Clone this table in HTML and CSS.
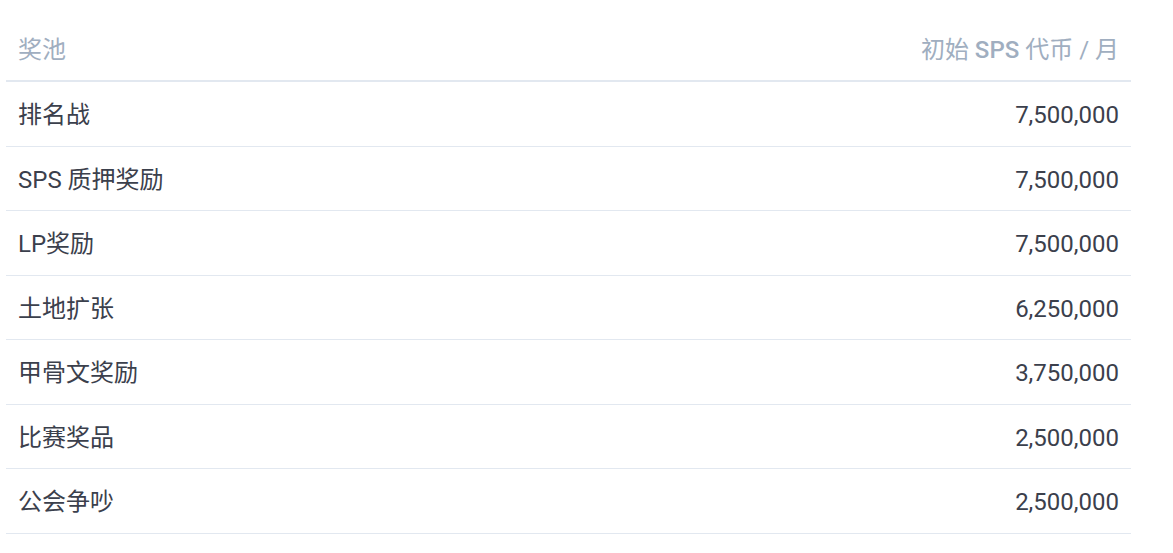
FILE: index.html
```html
<!DOCTYPE html>
<html lang="zh">
<head>
<meta charset="utf-8">
<title>奖池</title>
<link rel="stylesheet" href="styles.css">
</head>
<body>
<div class="page">
  <table class="pool-table">
    <thead>
      <tr>
        <th class="col-name">奖池</th>
        <th class="col-amount">初始 <span class="latin">SPS</span> 代币 / 月</th>
      </tr>
    </thead>
    <tbody>
      <tr><td class="col-name">排名战</td><td class="col-amount">7,500,000</td></tr>
      <tr><td class="col-name">SPS 质押奖励</td><td class="col-amount">7,500,000</td></tr>
      <tr><td class="col-name">LP奖励</td><td class="col-amount">7,500,000</td></tr>
      <tr><td class="col-name">土地扩张</td><td class="col-amount">6,250,000</td></tr>
      <tr><td class="col-name">甲骨文奖励</td><td class="col-amount">3,750,000</td></tr>
      <tr><td class="col-name">比赛奖品</td><td class="col-amount">2,500,000</td></tr>
      <tr><td class="col-name">公会争吵</td><td class="col-amount">2,500,000</td></tr>
    </tbody>
  </table>
</div>
</body>
</html>
```

FILE: styles.css
```css
html, body {
  margin: 0;
  padding: 0;
  background: #ffffff;
}

.page {
  padding: 16.5px 0 0 6px;
}

.pool-table {
  width: 1125px;
  border-collapse: collapse;
  font-family: Roboto, "Noto Sans CJK SC", sans-serif;
  font-size: 24px;
  color: #3b404c;
}

.pool-table th,
.pool-table td {
  padding: 16px 12px 12px;
  line-height: 35.5px;
  height: 35.5px;
  box-sizing: content-box;
  white-space: nowrap;
}

.pool-table td {
  border-top: 1px solid #e2e8f0;
}

.pool-table th {
  font-weight: 400;
  color: #a0aec0;
  border-bottom: 2px solid #e2e8f0;
}

.pool-table th .latin {
  font-weight: 500;
}

.pool-table tbody tr:last-child td {
  border-bottom: 1px solid #e2e8f0;
}

.col-name {
  text-align: left;
}

.col-amount {
  text-align: right;
}
```
